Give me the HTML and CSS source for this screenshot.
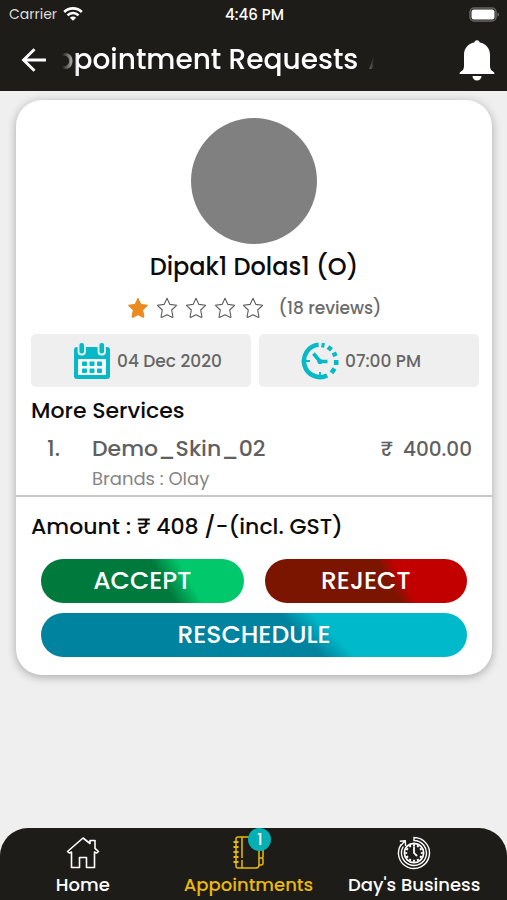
FILE: index.html
```html
<!DOCTYPE html>
<html lang="en">
<head>
<meta charset="utf-8">
<meta name="viewport" content="width=device-width, initial-scale=1">
<title>Appointment Requests</title>
<link rel="stylesheet" href="styles.css">
</head>
<body>
<header class="top">
  <div class="status">
    <span class="carrier">Carrier
      <svg width="20" height="14" viewBox="0 0 20 14" fill="none" stroke="#fff" stroke-width="2.6"><path d="M1.2 5a12.5 12.5 0 0 1 17.600 0M4.500 8.300a7.800 7.800 0 0 1 11 0"/><path d="M10 13.800 6.900 10.700a4.400 4.400 0 0 1 6.200 0z" fill="#fff" stroke="none"/></svg>
    </span>
    <span class="clock">4:46 PM</span>
    <svg class="battery" width="31" height="15" viewBox="0 0 31 15"><rect x="1" y="1" width="26" height="13" rx="4" fill="none" stroke="#66655f" stroke-width="1.500"/><rect x="2.500" y="2.500" width="23" height="10" rx="2.500" fill="#fff"/><path d="M28.500 5.200q3 2.300 0 4.600z" fill="#77766f"/></svg>
  </div>
  <div class="bar">
    <button class="icon-button" aria-label="Back"><svg width="26" height="26" viewBox="0 0 26 26" fill="none" stroke="#fff" stroke-width="2.800"><path d="M25 13H3M13.500 2.200 2.500 13l11 10.800"/></svg></button>
    <h1 class="title"><span class="ticker">Appointment Requests</span><span class="ticker-next" aria-hidden="true">A</span></h1>
    <button class="icon-button" aria-label="Notifications"><svg width="36" height="42" viewBox="0 0 36 42" fill="#fff"><path d="M15.200 3.500a2.900 2.900 0 0 1 5.600 0C27 4.600 31 9.300 31 16v11q0 4 3 5.500 1.500.9 1.500 2.500H.5q0-1.600 1.500-2.500Q5 31 5 27V16C5 9.300 9 4.600 15.200 3.500zM13.500 37h9a4.500 4.500 0 0 1-9 0z"/></svg></button>
  </div>
</header>

<main class="content">
  <article class="card">
    <div class="person">
      <div class="avatar"></div>
      <h2 class="name">Dipak1 Dolas1 (O)</h2>
      <div class="rating">
        <svg class="stars" width="138" height="22" viewBox="0 0 138 22" role="img" aria-label="1 out of 5 stars">
          <defs><path id="star" d="M11 1.300 13.900 7.400 20.600 8.300 15.700 13 16.900 19.700Q17 20.800 16 20.300L11 17.700 6 20.300Q5 20.800 5.100 19.700L6.300 13 1.400 8.300 8.100 7.400z" stroke-linejoin="round"/></defs>
          <use href="#star" fill="#e98b1f" stroke="#e98b1f"/>
          <g fill="none" stroke="#5c5c5c" stroke-width="1.100"><use href="#star" x="29"/><use href="#star" x="58"/><use href="#star" x="87"/><use href="#star" x="115"/></g>
        </svg>
        <span>(18 reviews)</span>
      </div>
    </div>

    <div class="slots">
      <div class="slot">
        <svg width="38" height="38" viewBox="0 0 38 38"><rect x="1" y="5" width="36" height="32" rx="3" fill="#05b9c7"/><g fill="#05b9c7" stroke="#efefef" stroke-width="1.800"><rect x="5.500" y="0" width="6.500" height="12.500" rx="3"/><rect x="25.500" y="0" width="6.500" height="12.500" rx="3"/></g><rect x="5" y="17" width="28" height="16" rx="1" fill="#f5fafa"/><g fill="#05b9c7"><rect x="9" y="19.500" width="5" height="4.500" rx="1"/><rect x="16.500" y="19.500" width="5" height="4.500" rx="1"/><rect x="24" y="19.500" width="5" height="4.500" rx="1"/><rect x="9" y="26.500" width="5" height="4.500" rx="1"/><rect x="16.500" y="26.500" width="5" height="4.500" rx="1"/><rect x="24" y="26.500" width="5" height="4.500" rx="1"/></g></svg>
        <span>04 Dec 2020</span>
      </div>
      <div class="slot">
        <svg width="38" height="38" viewBox="0 0 38 38" fill="none" stroke="#05b9c7" stroke-width="4.600"><path d="M17.600 2.800A16.200 16.200 0 1 0 26.200 33.500"/><path d="M20.500 2.900 23.500 3.500M27 5 30.500 7.700M32.800 10.500 34.500 14.200M35.200 18V23M33.600 26.500 30.500 30.800"/><path d="M12.500 11.500 19 19.500h7.500" stroke-width="3.600"/><circle cx="19" cy="19.500" r="2.600" fill="#05b9c7" stroke="none"/><path d="M5 19h4M19 35v-5" stroke-width="1.800"/></svg>
        <span>07:00 PM</span>
      </div>
    </div>

    <section class="services">
      <h3 class="heading">More Services</h3>
      <ol class="list">
        <li class="service">
          <span class="number">1.</span>
          <span class="service-name">Demo_Skin_02</span>
          <span class="price"><span>₹</span><span>400.00</span></span>
          <span class="brand">Brands : Olay</span>
        </li>
      </ol>
    </section>

    <section class="total">
      <p class="heading">Amount : ₹ 408 /-(incl. GST)</p>
      <div class="actions">
        <button class="action accept">ACCEPT</button>
        <button class="action reject">REJECT</button>
        <button class="action reschedule">RESCHEDULE</button>
      </div>
    </section>
  </article>
</main>

<nav class="tabs">
  <a class="tab" href="#home">
    <svg width="34" height="34" viewBox="0 0 34 34" fill="none" stroke="#fff" stroke-width="1.600" stroke-linejoin="round"><path d="M17 2 1.500 15.500l1.800 1.500 2.200-1V31.500h8V21.500h7v10h8V16l2.200 1 1.800-1.500-3.500-3.200V4.500h-5v3z"/></svg>
    <span>Home</span>
  </a>
  <a class="tab active" href="#appointments" aria-current="page">
    <span class="tab-icon">
      <svg width="34" height="34" viewBox="0 0 34 34" fill="none" stroke="#e9b90c" stroke-width="1.500"><path d="M27 6V3q0-2-2-2H7Q5 1 5 3v27q0 2 2 2h18q3 0 3-3h2q2 0 2-2v-4l-1-1 1-1v-7h-4M11 1v21M11 24v8M28 14v15M28 22h3"/><path d="M2.500 6h5M2.500 11h5M2.500 16h5M2.500 21h5M2.500 26h5" stroke-width="2"/></svg>
      <span class="badge">1</span>
    </span>
    <span>Appointments</span>
  </a>
  <a class="tab" href="#business">
    <svg width="34" height="34" viewBox="0 0 34 34" fill="none" stroke="#fff" stroke-width="1.400"><path d="M17 1.500A15.500 15.500 0 1 1 4 8.500M17 4.500A12.500 12.500 0 1 1 6.300 10.500M17 .8v4.400M2.800 5.200 8.300 4.800 8.600 10.200M8 5 3.300 10"/><circle cx="17" cy="17" r="9.600" stroke-width="1.800"/><path d="M17 10.500V17l3 3" stroke-width="1.800"/><circle cx="17" cy="17" r="7.800" pathLength="96" stroke-dasharray="4 4" stroke-dashoffset="2" stroke-width="2"/></svg>
    <span>Day's Business</span>
  </a>
</nav>
</body>
</html>
```
FILE: styles.css
```css
* {
  box-sizing: border-box;
}

body {
  margin: 0;
  min-height: 100vh;
  display: flex;
  flex-direction: column;
  background: #efefef;
  color: #0c0c0c;
  font-family: Poppins, Inter, "Noto Sans", sans-serif;
  font-weight: 500;
}

h1, h2, h3, p, ol {
  margin: 0;
  padding: 0;
  font-weight: 500;
}

svg {
  display: block;
  flex: none;
}

button {
  border: 0;
  padding: 0;
  font: inherit;
  color: #fff;
  cursor: pointer;
}

.top {
  background: #1d1c18;
  color: #fff;
}

.status {
  display: grid;
  grid-template-columns: 1fr auto 1fr;
  align-items: center;
  height: 28px;
  padding: 0 7px 0 9px;
  font-size: 15px;
}

.carrier {
  display: flex;
  align-items: center;
  gap: 6px;
  color: #deddda;
  font-weight: 400;
  font-size: 14px;
}

.battery {
  justify-self: end;
}

.bar {
  display: flex;
  align-items: center;
  height: 63px;
  padding: 0 12px 0 21px;
}

.icon-button {
  background: none;
}

.title {
  display: flex;
  gap: 10px;
  width: 312px;
  margin: 0 auto 0 15px;
  overflow: hidden;
  white-space: nowrap;
  font-size: 28px;
  line-height: 42px;
  mask-image: linear-gradient(90deg, transparent, #000 16px, #000 calc(100% - 14px), transparent);
}

.ticker {
  margin-left: -27px;
}

.content {
  flex: 1;
  padding: 9px 15px 24px 16px;
}

.card {
  border-radius: 26px;
  background: #fff;
  box-shadow: 0 2px 10px rgba(0, 0, 0, 0.3);
}

.person {
  display: flex;
  flex-direction: column;
  align-items: center;
  padding-top: 18px;
}

.avatar {
  width: 126px;
  height: 126px;
  border-radius: 50%;
  background: #808080;
}

.name {
  margin-top: 4px;
  font-size: 24px;
  line-height: 38px;
}

.rating {
  display: flex;
  align-items: center;
  gap: 14px;
  height: 44px;
  color: #6b6b6b;
  font-size: 17px;
}

.slots {
  display: grid;
  grid-template-columns: 1fr 1fr;
  gap: 8px;
  padding: 4px 13px 0 15px;
}

.slot {
  display: flex;
  align-items: center;
  gap: 6px;
  height: 53px;
  padding-left: 42px;
  border-radius: 5px;
  background: #efefef;
  color: #666;
  font-size: 17px;
}

.services {
  padding: 9px 20px 3px 15px;
  border-bottom: 2px solid #c8c8c8;
}

.heading {
  font-size: 22px;
  line-height: 30px;
}

.list {
  list-style: none;
}

.service {
  display: grid;
  grid-template-columns: 61px 1fr auto;
  align-items: center;
  padding-top: 6px;
  color: #606060;
  font-size: 22px;
  line-height: 34px;
}

.number {
  padding-left: 16px;
}

.price {
  display: flex;
  gap: 10px;
  font-size: 20px;
}

.brand {
  grid-column: 2;
  color: #858585;
  font-size: 18px;
  font-weight: 400;
  line-height: 26px;
}

.total {
  padding: 15px 15px 18px;
}

.actions {
  display: grid;
  grid-template-columns: 1fr 1fr;
  gap: 10px 21px;
  padding: 17px 10px 0;
}

.action {
  height: 44px;
  border-radius: 22px;
  font-size: 25px;
}

.accept {
  background: linear-gradient(60deg, #007a3c 59%, #00c86b 71%);
}

.reject {
  background: linear-gradient(60deg, #7c1500 60%, #c30000 67%);
}

.reschedule {
  grid-column: 1 / -1;
  background: linear-gradient(45deg, #00839e 60%, #00b9ca 67%);
}

.tabs {
  display: grid;
  grid-template-columns: repeat(3, 1fr);
  height: 72px;
  padding: 8px 10px 0 0;
  border-radius: 28px 28px 0 0;
  background: #1d1c18;
}

.tab {
  display: flex;
  flex-direction: column;
  align-items: center;
  gap: 2px;
  color: #fff;
  font-size: 18px;
  line-height: 26px;
  text-decoration: none;
  white-space: nowrap;
}

.active {
  color: #e9b90c;
}

.tab-icon {
  position: relative;
}

.badge {
  position: absolute;
  top: -8px;
  right: -6px;
  width: 23px;
  height: 23px;
  border-radius: 50%;
  background: #05b0b5;
  color: #fff;
  font-size: 15px;
  line-height: 23px;
  text-align: center;
}
```
